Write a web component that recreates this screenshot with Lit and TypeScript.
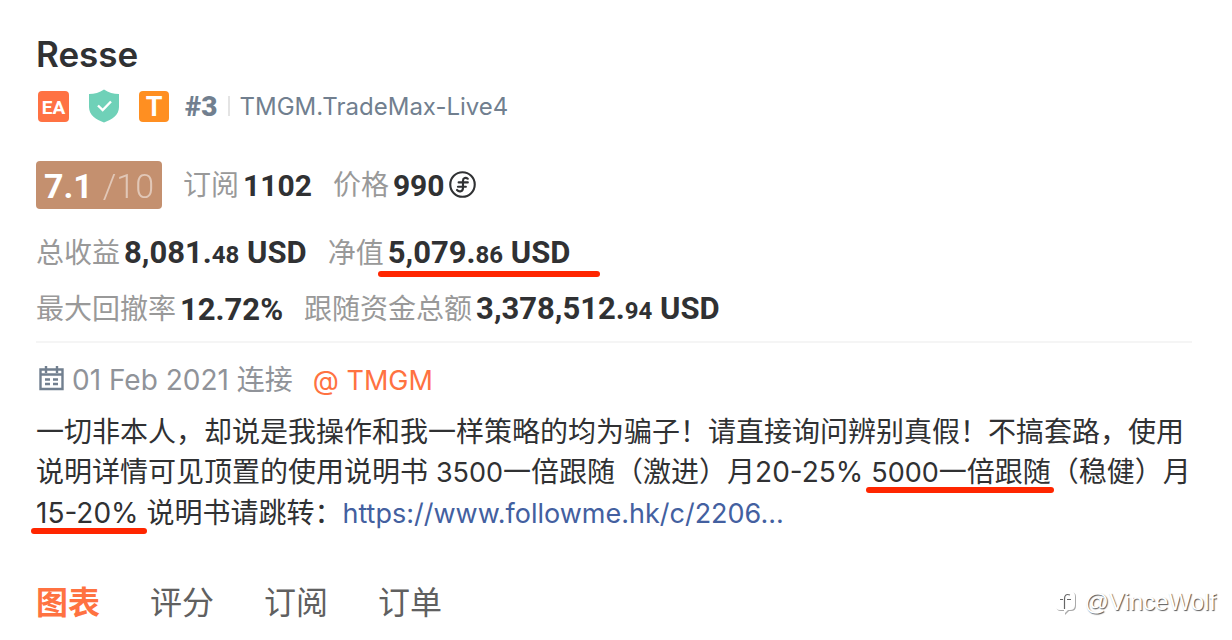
import { LitElement, html, css } from "lit";
import { customElement } from "lit/decorators.js";

interface Stat {
  label: string;
  value: string;
  cents?: string;
  unit?: string;
  marked?: boolean;
  coin?: boolean;
}

const subscription: Stat[] = [
  { label: "订阅", value: "1102" },
  { label: "价格", value: "990", coin: true },
];
const earnings: Stat[] = [
  { label: "总收益", value: "8,081.", cents: "48", unit: "USD" },
  { label: "净值", value: "5,079.", cents: "86", unit: "USD", marked: true },
];
const risk: Stat[] = [
  { label: "最大回撤率", value: "12.72%" },
  { label: "跟随资金总额", value: "3,378,512.", cents: "94", unit: "USD" },
];

@customElement("app-root")
export class AppRoot extends LitElement {
  static styles = css`
    :host {
      display: block;
      min-height: 100vh;
      box-sizing: border-box;
      padding: 30px 40px 0 36px;
      position: relative;
      background: #fff;
      color: #303133;
      font-family: Inter, "Noto Sans CJK SC", sans-serif;
      font-size: 28px;
    }
    h1 {
      margin: 0;
      font-size: 35px;
      line-height: 48px;
      font-weight: 600;
    }
    .badges {
      display: flex;
      align-items: center;
      height: 56px;
      color: #717f8f;
    }
    .badges svg {
      display: block;
      margin-right: 17px;
    }
    .badges svg:last-of-type {
      margin-right: 15px;
    }
    .glyph {
      font-family: Roboto, sans-serif;
      font-weight: 700;
      fill: #fff;
      text-anchor: middle;
    }
    .rank {
      padding-top: 2px;
      font: 900 28px/40px Roboto, sans-serif;
    }
    .server {
      padding-top: 2px;
      font-size: 24px;
      line-height: 24px;
      margin-left: 10px;
    }
    .bar {
      width: 2px;
      height: 20px;
      margin-left: 10px;
      background: #e4e4e4;
    }
    .stats {
      display: flex;
      align-items: center;
      gap: 21px;
      height: 56px;
    }
    .top {
      margin-top: 23px;
      margin-bottom: 12px;
    }
    .score {
      display: flex;
      align-items: center;
      justify-content: center;
      gap: 10px;
      width: 126px;
      height: 48px;
      box-sizing: border-box;
      padding-top: 2px;
      border-radius: 4px;
      background: #c4906f;
      color: #fff;
      font: 700 34px/46px Roboto, sans-serif;
    }
    .outof {
      font-weight: 300;
      opacity: 0.5;
    }
    .stat {
      display: flex;
      align-items: center;
      gap: 4px;
      line-height: 40px;
      white-space: nowrap;
    }
    .label {
      color: #999;
    }
    .value {
      position: relative;
      display: flex;
      align-items: center;
      gap: 4px;
      padding-top: 2px;
      font-family: Roboto, sans-serif;
      font-weight: 700;
      font-size: 31px;
    }
    .top .value {
      font-size: 30px;
    }
    .value svg {
      margin-bottom: 3px;
    }
    .cents {
      font-size: 24px;
    }
    .mark {
      position: absolute;
      left: -10px;
      right: -30px;
      bottom: -2px;
      height: 6px;
      border-radius: 3px;
      background: #ff2600;
    }
    .meta {
      display: flex;
      align-items: center;
      border-top: 2px solid #f5f5f5;
      margin-top: 4px;
      height: 69px;
      color: #909399;
    }
    .meta svg {
      margin: 0 8px 0 3px;
    }
    .meta a {
      margin-left: 20px;
      color: #ff7241;
      text-decoration: none;
    }
    .latin,
    .about a,
    .meta a {
      font-size: 27px;
    }
    .meta p {
      margin: 0;
    }
    .about {
      margin: 0;
      line-height: 40px;
    }
    .about a {
      color: #4360a0;
      text-decoration: none;
    }
    .hl {
      position: relative;
      white-space: nowrap;
    }
    .under {
      left: -5px;
      right: -3px;
      bottom: -4px;
    }
    .under.wide {
      right: -8px;
    }
    nav {
      display: flex;
      gap: 50px;
      margin-top: 45px;
    }
    nav button {
      border: 0;
      padding: 0;
      background: none;
      color: #606060;
      font: 400 32px/48px Inter, "Noto Sans CJK SC", sans-serif;
    }
    nav .active {
      color: #ff7241;
      font-weight: 700;
    }
    .watermark {
      position: absolute;
      right: 16px;
      bottom: 22px;
      display: flex;
      align-items: center;
      gap: 7px;
      color: #fff;
      font: 400 24px/32px "Liberation Sans", sans-serif;
      text-shadow: 1px 1px 1px #555;
    }
    .watermark svg {
      filter: drop-shadow(1px 1px 0 #aaa);
    }
  `;

  private coin() {
    return html`<svg width="27" height="27" viewBox="0 0 28 28" fill="none" stroke="#303133" stroke-width="2.2" stroke-linecap="round" aria-hidden="true">
      <circle cx="14" cy="14" r="12.700" />
      <path d="M19.500 8c-2-1.700-5-1-5 2v7.500c0 3.500-3.700 5-6.200 2.200M10 11.800h9.500M9.300 16.300h8.200" />
    </svg>`;
  }

  private stat(s: Stat) {
    return html`<div class="stat">
      <span class="label">${s.label}</span>
      <span class="value">
        <span>${s.value}${s.cents ? html`<span class="cents">${s.cents}</span>` : ""}${s.unit ? ` ${s.unit}` : ""}</span>
        ${s.coin ? this.coin() : ""}${s.marked ? html`<i class="mark"></i>` : ""}
      </span>
    </div>`;
  }

  render() {
    return html`
      <h1>Resse</h1>
      <div class="badges">
        <svg width="34" height="34" viewBox="0 0 34 34" role="img" aria-label="EA">
          <rect x="2" y="2" width="31" height="31" rx="4" fill="#ff7243" />
          <text class="glyph" x="17.500" y="24.500" font-size="19">EA</text>
        </svg>
        <svg width="34" height="34" viewBox="0 0 34 34" role="img" aria-label="Verified">
          <path d="M17 .5c4.500 3.300 9.500 4.400 15 4.600V18c0 8-7 12.500-15 15.500C9 30.500 2 26 2 18V5.100C7.500 4.900 12.500 3.800 17 .5z" fill="#6fd1b8" />
          <path d="M11 16.500l4.700 4.500 8.300-8.500" fill="none" stroke="#fff" stroke-width="2.400" />
        </svg>
        <svg width="32" height="34" viewBox="0 0 32 34" role="img" aria-label="T">
          <rect x="1" y="2" width="30" height="31" rx="4" fill="#ff8f21" />
          <text class="glyph" x="16" y="27" font-size="27">T</text>
        </svg>
        <span class="rank">#3</span>
        <span class="bar"></span>
        <span class="server">TMGM.TradeMax-Live4</span>
      </div>
      <div class="stats top">
        <div class="score"><span>7.1</span><span class="outof">/10</span></div>
        ${subscription.map((s) => this.stat(s))}
      </div>
      <div class="stats">${earnings.map((s) => this.stat(s))}</div>
      <div class="stats">${risk.map((s) => this.stat(s))}</div>
      <div class="meta">
        <svg width="25" height="26" viewBox="0 0 25 26" fill="none" stroke="#717f8f" stroke-width="2.400" aria-hidden="true">
          <path d="M1.500 4.500h22v19.500h-22zM1.500 9.500h22M7 1v7M18 1v7M6 14.500h5M14 14.500h5M6 19h5M14 19h5" />
        </svg>
        <p>01 Feb 2021 连接<a href="#tmgm">@ TMGM</a></p>
      </div>
      <p class="about">一切非本人，却说是我操作和我一样策略的均为骗子！请直接询问辨别真假！不搞套路，使用说明详情可见顶置的使用说明书 <span class="latin">3500</span>一倍跟随（激进）月20-25% <span class="hl"><span class="latin">5000</span>一倍跟随<i class="mark under"></i></span>（稳健）月<span class="hl">15-20%<i class="mark under wide"></i></span> 说明书请跳转：<a href="#guide">https://www.followme.hk/c/2206...</a></p>
      <nav>
        <button class="active">图表</button>
        <button>评分</button>
        <button>订阅</button>
        <button>订单</button>
      </nav>
      <div class="watermark">
        <svg width="24" height="26" viewBox="0 0 24 26" fill="none" aria-hidden="true">
          <path d="M7 2h10q5 0 5 5v9q0 5-5 5h-2l-4 4v-4H7q-5 0-5-5V7q0-5 5-5z" fill="#fff" />
          <path d="M17 6c-4-1.500-5.500.5-5.500 4v10M7 10.500h3M14 10.500h4" stroke="#666" stroke-width="1.200" />
        </svg>
        <span>@VinceWolf</span>
      </div>
    `;
  }
}
